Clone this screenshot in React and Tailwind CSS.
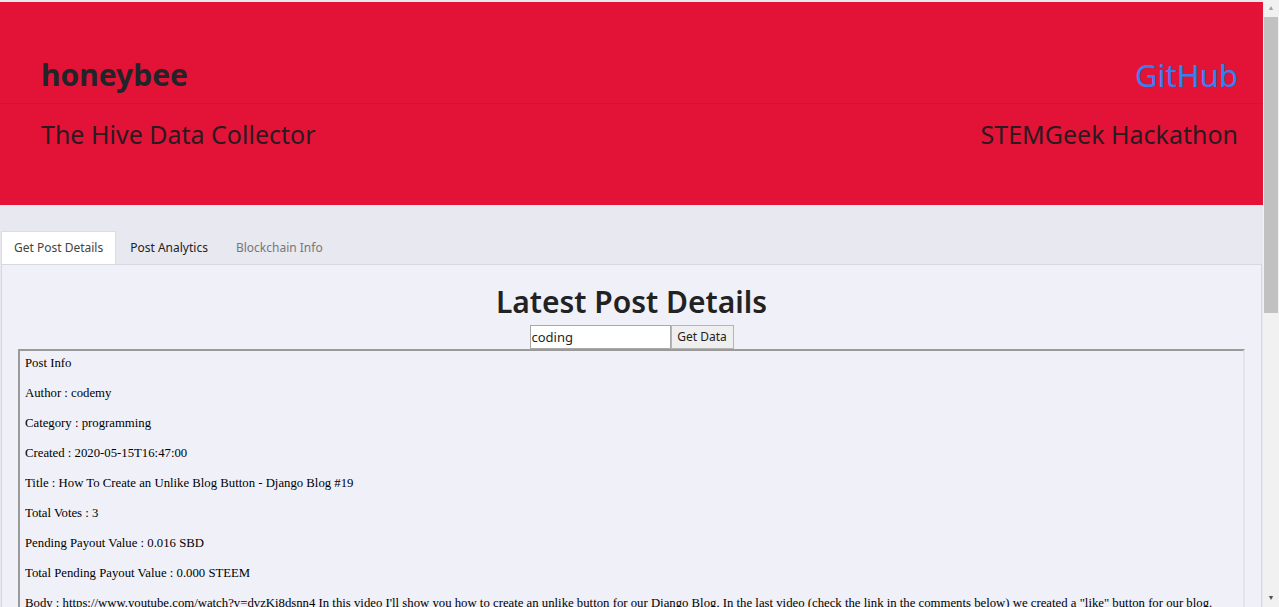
import React, { useState } from "react";

const rows = [
  "Post Info",
  "Author : codemy",
  "Category : programming",
  "Created : 2020-05-15T16:47:00",
  "Title : How To Create an Unlike Blog Button - Django Blog #19",
  "Total Votes : 3",
  "Pending Payout Value : 0.016 SBD",
  "Total Pending Payout Value : 0.000 STEEM",
  'Body : https://www.youtube.com/watch?v=dvzKi8dsnn4 In this video I\'ll show you how to create an unlike button for our Django Blog. In the last video (check the link in the comments below) we created a "like" button for our blog.',
];

const tabs = ["Get Post Details", "Post Analytics", "Blockchain Info"];

function Scrollbar() {
  return (
    <div className="flex w-[16px] shrink-0 flex-col bg-[#f1f1f1]">
      <div className="flex h-[17px] items-center justify-center text-[7px] text-[#a3a3a3]">▲</div>
      <div className="mx-[1px] h-[296px] bg-[#c1c1c1]" />
      <div className="flex-1" />
      <div className="flex h-[17px] items-center justify-center text-[7px] text-[#505050]">▼</div>
    </div>
  );
}

export default function App() {
  const [tag, setTag] = useState("coding");
  const [active, setActive] = useState(0);

  return (
    <div className="flex h-[607px] overflow-hidden bg-[#e8e8f0]">
      <div
        className="min-w-0 flex-1 overflow-hidden pt-[2px] text-[#212529]"
        style={{ fontFamily: '"Noto Sans", "Open Sans", sans-serif' }}
      >
        <header className="bg-[#e31337]">
          <div className="flex h-[102px] items-start justify-between border-b border-[#d41134] pl-[41px] pr-[25px] pt-[56px]">
            <h1 className="text-[30px] font-bold leading-[34px]">honeybee</h1>
            <a href="#" className="text-[31px] leading-[34px] text-[#3380f5]">
              GitHub
            </a>
          </div>
          <div className="flex h-[101px] items-start justify-between pl-[41px] pr-[25px] pt-[15px]">
            <h2 className="text-[25px] leading-[30px] text-[#2b1a20]">The Hive Data Collector</h2>
            <h2 className="text-[25px] leading-[30px] text-[#2b1a20]">STEMGeek Hackathon</h2>
          </div>
        </header>

        <div className="pt-[26px]">
          <div className="flex pl-[1px] text-[12px]">
            {tabs.map((t, i) => (
              <button
                key={t}
                onClick={() => setActive(i)}
                className={
                  i === active
                    ? "h-[33px] border border-b-0 border-[#dcdce4] bg-white px-[12px] text-[#444]"
                    : i === 1
                    ? "h-[33px] px-[14px] text-[#222]"
                    : "h-[33px] px-[14px] text-[#777]"
                }
              >
                {t}
              </button>
            ))}
          </div>

          <div className="mx-[1px] border border-[#d8d8e0] bg-[#f0f0f8] px-[16px] pb-4">
            <h3 className="pt-[18px] text-center text-[30px] font-semibold leading-[38px] text-[#222]">
              Latest Post Details
            </h3>
            <div className="mt-[4px] flex justify-center">
              <input
                value={tag}
                onChange={(e) => setTag(e.target.value)}
                className="h-[24px] w-[141px] border border-[#a9a9a9] bg-white px-[1px] text-[13px] outline-none"
              />
              <button className="h-[24px] w-[63px] border border-[#b5b5b5] bg-[#efefef] text-[12px] text-[#222]">
                Get Data
              </button>
            </div>
            <div
              className="border-2 border-b-0 border-r-[#e4e4ec] border-l-[#9a9a9a] border-t-[#9a9a9a] px-[5px] pt-[5px]"
              style={{ fontFamily: '"Liberation Serif", "Times New Roman", serif' }}
            >
              {rows.map((r) => (
                <p key={r} className="mb-[15px] truncate text-[12.75px] leading-[15px] text-black">
                  {r}
                </p>
              ))}
            </div>
          </div>
        </div>
      </div>
      <Scrollbar />
    </div>
  );
}
